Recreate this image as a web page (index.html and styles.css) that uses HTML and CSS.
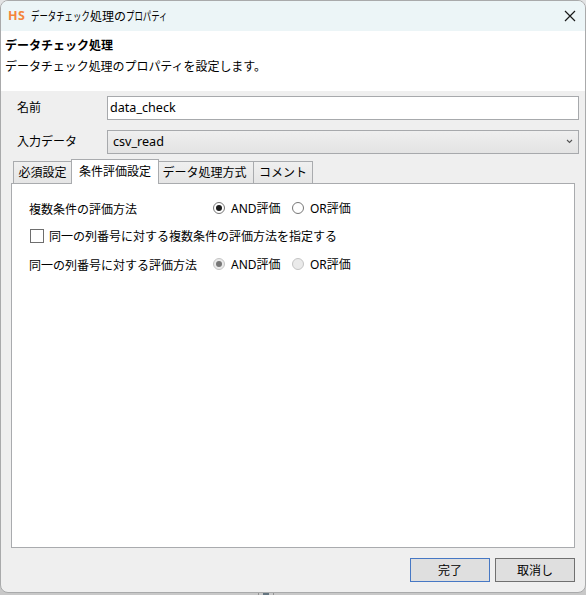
FILE: index.html
```html
<!DOCTYPE html>
<html lang="ja">
<head>
<meta charset="utf-8">
<title>データチェック処理のプロパティ</title>
<link rel="stylesheet" href="styles.css">
</head>
<body>
<main class="dialog">
  <header class="titlebar">
    <span class="logo">HS</span>
    <h1 class="title"><span class="kana kana-start">データチェック</span><span>処理の</span><span class="kana">プロパティ</span></h1>
    <svg class="close" width="12" height="12" viewBox="0 0 12 12"><path d="M1 1L11 11M11 1L1 11" fill="none" stroke="#1a1a1a" stroke-width="1.2"/></svg>
  </header>
  <section class="intro">
    <h2>データチェック処理</h2>
    <p>データチェック処理のプロパティを設定します。</p>
  </section>
  <section class="fields">
    <span class="label">名前</span><div class="input latin">data_check</div>
    <span class="label">入力データ</span>
    <div class="select latin"><span>csv_read</span><svg class="chevron" width="7" height="5" viewBox="0 0 7 5"><path d="M1 1L3.5 3.5L6 1" fill="none" stroke="#555" stroke-width="1.1"/></svg></div>
  </section>
  <nav class="tabs">
    <div class="tab first">必須設定</div>
    <div class="tab active">条件評価設定</div>
    <div class="tab third">データ処理方式</div>
    <div class="tab fourth">コメント</div>
  </nav>
  <section class="panel">
    <div class="row">
      <span class="caption">複数条件の評価方法</span>
      <span class="radio checked"></span><span class="option and"><span class="latin">AND</span>評価</span>
      <span class="radio"></span><span class="option"><span class="latin">OR</span>評価</span>
    </div>
    <div class="row"><span class="checkbox"></span><span>同一の列番号に対する複数条件の評価方法を指定する</span></div>
    <div class="row">
      <span class="caption">同一の列番号に対する評価方法</span>
      <span class="radio checked disabled"></span><span class="option and"><span class="latin">AND</span>評価</span>
      <span class="radio disabled"></span><span class="option"><span class="latin">OR</span>評価</span>
    </div>
  </section>
  <footer class="actions"><div class="button primary">完了</div><div class="button">取消し</div></footer>
</main>
<div class="backdrop-detail"></div>
</body>
</html>
```
FILE: styles.css
```css
* { box-sizing: border-box; }
body {
  margin: 0;
  width: 586px;
  height: 595px;
  overflow: hidden;
  background: linear-gradient(#e3e4e5 0, #c8c8c8 100%);
  color: #000;
  font: 12px/18px "Noto Sans CJK JP", sans-serif;
}
h1, h2, p { margin: 0; font-size: 12px; line-height: 18px; }
.dialog {
  width: 586px;
  height: 593px;
  border: 1px solid #a9aaab;
  border-radius: 8px;
  overflow: hidden;
  background: #efefef;
}
.titlebar {
  height: 30px;
  display: flex;
  align-items: center;
  padding: 0 9px 1px 7px;
  background: #ecf5f7;
}
.logo {
  width: 23px;
  color: #f4853c;
  font: bold 12.5px/18px "Open Sans", sans-serif;
  letter-spacing: 0.4px;
}
.title { display: flex; font-weight: 400; }
.kana { width: 42px; white-space: nowrap; transform: scaleX(.7); transform-origin: left; }
.kana-start { width: 59px; }
.close { margin-left: auto; }
.intro { height: 60px; padding: 5px 4px; background: #fff; }
.intro p { margin-top: 3px; letter-spacing: -0.05px; }
.fields {
  display: grid;
  grid-template-columns: 90px 472px;
  grid-template-rows: 24px 24px;
  row-gap: 10px;
  padding: 5px 0 0 16px;
}
.label { padding-top: 2px; }
.latin { font-family: "Noto Sans", "Noto Sans CJK JP", sans-serif; }
.input, .select { border: 1px solid #a7a9ac; font-size: 12.6px; line-height: 22px; }
.input { background: #fff; padding-left: 2px; }
.select {
  display: flex;
  justify-content: space-between;
  align-items: center;
  padding: 0 5px;
  background: linear-gradient(#efefef, #e3e3e3);
}
.chevron { margin-bottom: 2px; }
.tabs { display: flex; height: 24px; margin-top: 6px; padding-left: 12px; align-items: flex-end; position: relative; }
.tab {
  height: 23px;
  border: 1px solid #a9abae;
  background: linear-gradient(#f0f0f0, #e5e5e5);
  text-align: center;
  line-height: 20px;
  white-space: nowrap;
}
.first { width: 58px; border-right: 0; }
.active { width: 88px; height: 25px; background: #fff; border-bottom: 0; line-height: 22px; }
.third { width: 95px; border-left: 0; padding-right: 3px; }
.fourth { width: 59px; border-left: 0; }
.panel {
  width: 564px;
  height: 365px;
  margin: -1px 0 0 10px;
  padding: 10px 17px;
  border: 1px solid #a9abae;
  background: #fff;
}
.row { height: 28px; display: flex; align-items: center; }
.caption { width: 184px; padding-top: 2px; }
.radio {
  display: grid;
  place-items: center;
  width: 12px;
  height: 12px;
  margin-right: 6px;
  border: 1px solid #777;
  border-radius: 50%;
}
.checked::before { content: ""; width: 6px; height: 6px; border-radius: 50%; background: #1c1c1c; }
.disabled { border-color: #c4c4c4; background: #eaeaea; }
.disabled.checked::before { background: #777; }
.and { width: 61px; }
.option { white-space: nowrap; }
.checkbox { width: 14px; height: 14px; border: 1px solid #6e6e6e; margin: 0 5px 0 1px; }
.actions { display: flex; justify-content: flex-end; gap: 5px; padding: 10px 10px 0; }
.button { width: 80px; height: 24px; border: 1px solid #707070; background: #dfdfdf; text-align: center; line-height: 21px; }
.primary { border-color: #4778c4; }
.backdrop-detail { width: 16px; height: 2px; margin-left: 258px; border: solid #929292; border-width: 0 1px; background: linear-gradient(90deg, #c9c9c9 4px, #647580 4px 10px, #c9c9c9 10px); }
```
